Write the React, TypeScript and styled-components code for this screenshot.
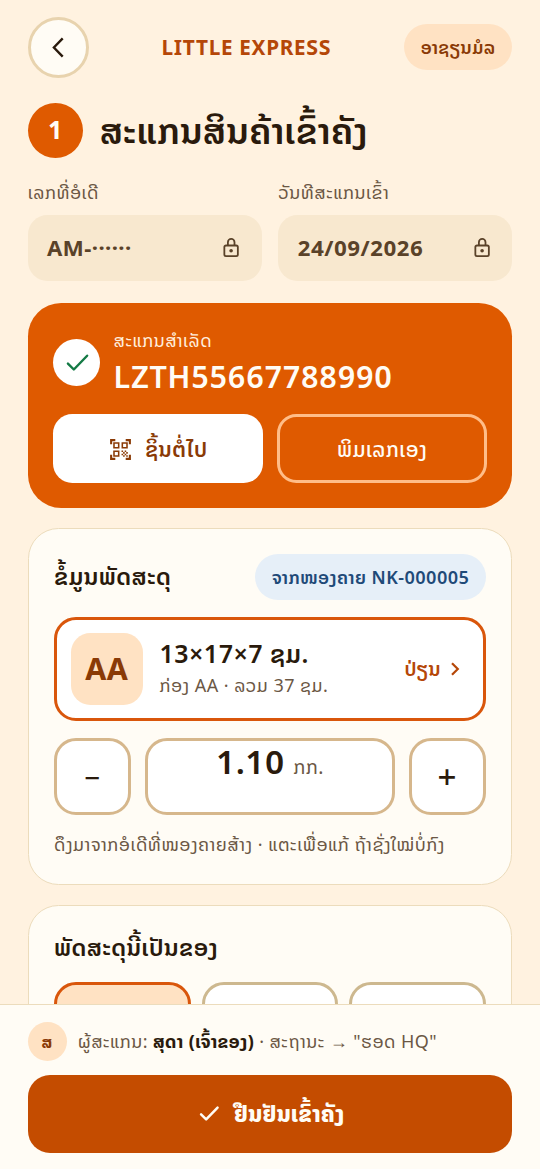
import React from "react";
import styled, { createGlobalStyle } from "styled-components";
import { MdQrCodeScanner } from "react-icons/md";

const Global = createGlobalStyle`
  * { box-sizing: border-box; }
  html, body { margin: 0; padding: 0; }
  body {
    background: #fff2e0;
    color: #2a1a0c;
    font-family: "Noto Sans Lao", "Noto Sans", sans-serif;
    letter-spacing: 0.443px;
  }
  button { font: inherit; color: inherit; letter-spacing: inherit; margin: 0; padding: 0; }
`;

const Screen = styled.div`
  height: 1169px;
  overflow: hidden;
  display: flex;
  flex-direction: column;
`;

const Content = styled.main`
  flex: 1;
  min-height: 0;
  overflow: hidden;
  padding: 16.6px 27.7px 0;
  display: flex;
  flex-direction: column;
  & > * { flex-shrink: 0; }
`;

const Header = styled.header`
  display: flex;
  align-items: center;
  justify-content: space-between;
  height: 61px;
`;

const BackButton = styled.button`
  width: 61px;
  height: 61px;
  border-radius: 50%;
  border: 3px solid #e8d3ae;
  background: #fffcf5;
  display: grid;
  place-items: center;
`;

const Brand = styled.div`
  font-size: 20.77px;
  font-weight: 700;
  letter-spacing: 0.72px;
  line-height: 28px;
  padding-top: 1px;
  color: #b54708;
`;

const Pill = styled.div<{ $tone: "peach" | "blue" }>`
  height: 45.7px;
  padding: 0 16.6px;
  border-radius: 23px;
  display: flex;
  align-items: center;
  font-size: 18px;
  font-weight: 600;
  white-space: nowrap;
  background: ${(p) => (p.$tone === "peach" ? "#ffe2c3" : "#e6eff8")};
  color: ${(p) => (p.$tone === "peach" ? "#8a3a06" : "#1f4a78")};
`;

const TitleRow = styled.div`
  margin-top: 25px;
  height: 55.4px;
  display: flex;
  align-items: center;
  gap: 16.6px;
`;

const StepNumber = styled.div`
  width: 55.4px;
  height: 55.4px;
  border-radius: 50%;
  background: #df5a00;
  color: #fffcf5;
  font-size: 24.9px;
  font-weight: 700;
  display: grid;
  place-items: center;
`;

const Title = styled.h1`
  margin: 0;
  padding-top: 2px;
  font-size: 36px;
  font-weight: 600;
  line-height: 46px;
  white-space: nowrap;
`;

const Fields = styled.div`
  margin-top: 22px;
  display: grid;
  grid-template-columns: 1fr 1fr;
  gap: 16.6px;
`;

const FieldLabel = styled.div`
  font-size: 18px;
  line-height: 26.3px;
  margin-bottom: 8.3px;
  color: #6b5744;
`;

const FieldBox = styled.div`
  height: 66.5px;
  border-radius: 19.4px;
  background: #f8e8cf;
  padding: 0 19.4px;
  display: flex;
  align-items: center;
  justify-content: space-between;
  font-size: 22.15px;
  font-weight: 700;
  color: #5a4229;
`;

const ScanCard = styled.section`
  margin-top: 22px;
  height: 205px;
  border-radius: 33.2px;
  background: #df5a00;
  padding: 25px;
  color: #fffcf5;
`;

const ScanTop = styled.div`
  display: flex;
  align-items: center;
  gap: 13.85px;
  height: 72px;
`;

const CheckBadge = styled.div`
  width: 47px;
  height: 47px;
  border-radius: 50%;
  background: #fff;
  color: #147a45;
  display: grid;
  place-items: center;
  margin-bottom: 3px;
`;

const ScanLabel = styled.div`
  font-size: 18px;
  line-height: 26px;
  padding-bottom: 2px;
  margin-top: -2px;
  color: #ffeedd;
`;

const ScanCode = styled.div`
  font-size: 30.46px;
  line-height: 42px;
  font-weight: 600;
  letter-spacing: 0.74px;
`;

const ScanActions = styled.div`
  margin-top: 14px;
  display: grid;
  grid-template-columns: 1fr 1fr;
  gap: 13.85px;
`;

const ScanButton = styled.button<{ $solid?: boolean }>`
  height: 69.2px;
  border-radius: 19.4px;
  display: flex;
  align-items: center;
  justify-content: center;
  gap: 12px;
  padding-top: 1px;
  font-size: ${(p) => (p.$solid ? "21.2px" : "20.77px")};
  font-weight: ${(p) => (p.$solid ? 600 : 500)};
  border: ${(p) => (p.$solid ? "0" : "3px solid #ffbd88")};
  background: ${(p) => (p.$solid ? "#fff" : "transparent")};
  color: ${(p) => (p.$solid ? "#8a3a06" : "#fffcf5")};
`;

const Card = styled.section`
  margin-top: 20px;
  border: 1.4px solid #ecdcbc;
  border-radius: 30.5px;
  background: #fffcf5;
  padding: 25.3px;
`;

const CardHead = styled.div`
  display: flex;
  align-items: center;
  justify-content: space-between;
  height: 45.7px;
`;

const CardTitle = styled.h2`
  margin: 0;
  font-size: 23.54px;
  font-weight: 600;
  line-height: 34px;
`;

const SizeRow = styled.div`
  margin-top: 16.6px;
  height: 104.5px;
  border: 3px solid #d9560b;
  border-radius: 22px;
  background: #fff;
  padding: 0 23px 0 13.85px;
  display: flex;
  align-items: center;
`;

const SizeTile = styled.div`
  width: 72px;
  height: 72px;
  border-radius: 19.4px;
  background: #ffe2c3;
  color: #8a3a06;
  font-size: 30.46px;
  font-weight: 700;
  display: grid;
  place-items: center;
`;

const SizeText = styled.div`
  margin-left: 16.6px;
  flex: 1;
`;

const SizeMain = styled.div`
  font-size: 24.9px;
  font-weight: 600;
  line-height: 34px;
`;

const SizeSub = styled.div`
  font-size: 18px;
  line-height: 26px;
  padding-top: 1px;
  color: #6b5744;
`;

const Change = styled.div`
  display: flex;
  align-items: center;
  gap: 9px;
  font-size: 19.4px;
  font-weight: 600;
  color: #b54708;
`;

const Stepper = styled.div`
  margin-top: 16.6px;
  display: grid;
  grid-template-columns: 77.5px 1fr 77.5px;
  gap: 13.85px;
  height: 77.5px;
`;

const StepButton = styled.button<{ $size: number }>`
  border: 3px solid #d6b78c;
  border-radius: 22px;
  background: #fff;
  font-family: "Noto Sans", sans-serif;
  font-size: ${(p) => p.$size}px;
  font-weight: 500;
  display: grid;
  place-items: center;
`;

const Weight = styled.div`
  border: 3px solid #d6b78c;
  border-radius: 22px;
  background: #fff;
  text-align: center;
  font-size: 33.2px;
  line-height: 43px;
  font-weight: 600;
`;

const Unit = styled.span`
  font-size: 19.4px;
  font-weight: 400;
  color: #6b5744;
`;

const Note = styled.p`
  margin: 17px 0 0;
  font-size: 18px;
  line-height: 26.3px;
  letter-spacing: 0.47px;
  color: #6b5744;
  white-space: nowrap;
`;

const Options = styled.div`
  margin-top: 16.6px;
  display: grid;
  grid-template-columns: repeat(3, 1fr);
  gap: 11px;
`;

const Option = styled.div<{ $active?: boolean }>`
  height: 88px;
  border-radius: 22px;
  border: 3px solid ${(p) => (p.$active ? "#d9560b" : "#cdb88f")};
  background: ${(p) => (p.$active ? "#ffe2c3" : "#fff")};
`;

const Footer = styled.footer`
  height: 165px;
  border-top: 1.4px solid #ecdcbc;
  background: #fffcf5;
  padding: 17px 27.7px;
`;

const Operator = styled.div`
  display: flex;
  align-items: center;
  gap: 11px;
  height: 39px;
  font-size: 18px;
  letter-spacing: 0.4px;
  color: #6b5744;
  white-space: nowrap;
  b { color: #2a1a0c; font-weight: 700; }
`;

const Avatar = styled.div`
  width: 39px;
  height: 39px;
  border-radius: 50%;
  background: #ffe2c3;
  color: #8a3a06;
  font-size: 16.6px;
  font-weight: 700;
  display: grid;
  place-items: center;
`;

const Confirm = styled.button`
  margin-top: 14px;
  width: 100%;
  height: 77.5px;
  border: 0;
  border-radius: 22px;
  background: #c44c00;
  color: #fffcf5;
  font-size: 22.3px;
  font-weight: 800;
  display: flex;
  align-items: center;
  justify-content: center;
  gap: 13.85px;
`;

const Check = ({ size, stroke }: { size: number; stroke: number }) => (
  <svg width={size} height={size} viewBox="0 0 24 24" fill="none">
    <path
      d="M4.9 12.9 L9.8 17.8 L20.8 6.4"
      stroke="currentColor"
      strokeWidth={stroke}
      strokeLinecap="round"
      strokeLinejoin="round"
    />
  </svg>
);

const Lock = () => (
  <svg width="22" height="22" viewBox="0 0 22 22" fill="none" stroke="currentColor" strokeWidth="1.8">
    <rect x="4.35" y="8.5" width="13.5" height="10.7" rx="1.6" />
    <path d="M7.9 8.5 V5.2 a3.3 3.3 0 0 1 6.6 0 V8.5" />
    <circle cx="11.1" cy="13.8" r="1.8" fill="currentColor" stroke="none" />
  </svg>
);

export default function App() {
  return (
    <Screen>
      <Global />
      <Content>
        <Header>
          <BackButton aria-label="Back">
            <svg width="12" height="21" viewBox="0 0 12 21" fill="none">
              <path d="M10.7 1.4 L1.9 10.5 L10.7 19.6" stroke="currentColor" strokeWidth="2.4" />
            </svg>
          </BackButton>
          <Brand>LITTLE EXPRESS</Brand>
          <Pill $tone="peach">ອາຊຽນມໍລ</Pill>
        </Header>

        <TitleRow>
          <StepNumber>1</StepNumber>
          <Title>ສະແກນສິນຄ້າເຂົ້າຄັງ</Title>
        </TitleRow>

        <Fields>
          <div>
            <FieldLabel>ເລກທີ່ອໍເດີ</FieldLabel>
            <FieldBox>
              <span>AM-······</span>
              <Lock />
            </FieldBox>
          </div>
          <div>
            <FieldLabel>ວັນທີສະແກນເຂົ້າ</FieldLabel>
            <FieldBox>
              <span>24/09/2026</span>
              <Lock />
            </FieldBox>
          </div>
        </Fields>

        <ScanCard>
          <ScanTop>
            <CheckBadge>
              <Check size={29} stroke={2} />
            </CheckBadge>
            <div>
              <ScanLabel>ສະແກນສຳເລັດ</ScanLabel>
              <ScanCode>LZTH55667788990</ScanCode>
            </div>
          </ScanTop>
          <ScanActions>
            <ScanButton $solid>
              <MdQrCodeScanner size={25} />
              ຊິ້ນຕໍ່ໄປ
            </ScanButton>
            <ScanButton>ພິມເລກເອງ</ScanButton>
          </ScanActions>
        </ScanCard>

        <Card>
          <CardHead>
            <CardTitle>ຂໍ້ມູນພັດສະດຸ</CardTitle>
            <Pill $tone="blue">ຈາກໜອງຄາຍ NK-000005</Pill>
          </CardHead>
          <SizeRow>
            <SizeTile>AA</SizeTile>
            <SizeText>
              <SizeMain>13×17×7 ຊມ.</SizeMain>
              <SizeSub>ກ່ອງ AA · ລວມ 37 ຊມ.</SizeSub>
            </SizeText>
            <Change>
              ປ່ຽນ
              <svg width="10" height="14" viewBox="0 0 10 14" fill="none">
                <path d="M2 1.2 L7.8 7 L2 12.8" stroke="currentColor" strokeWidth="2.2" />
              </svg>
            </Change>
          </SizeRow>
          <Stepper>
            <StepButton $size={27.7}>−</StepButton>
            <Weight>
              1.10 <Unit>ກກ.</Unit>
            </Weight>
            <StepButton $size={33.2}>+</StepButton>
          </Stepper>
          <Note>ດຶງມາຈາກອໍເດີທີ່ໜອງຄາຍສ້າງ · ແຕະເພື່ອແກ້ ຖ້າຊັ່ງໃໝ່ບໍ່ກົງ</Note>
        </Card>

        <Card>
          <CardTitle>ພັດສະດຸນີ້ເປັນຂອງ</CardTitle>
          <Options>
            <Option $active />
            <Option />
            <Option />
          </Options>
        </Card>
      </Content>

      <Footer>
        <Operator>
          <Avatar>ສ</Avatar>
          <span>
            ຜູ້ສະແກນ: <b>ສຸດາ (ເຈົ້າຂອງ)</b> · ສະຖານະ → "ຮອດ HQ"
          </span>
        </Operator>
        <Confirm>
          <Check size={24.9} stroke={2.4} />
          ຢືນຢັນເຂົ້າຄັງ
        </Confirm>
      </Footer>
    </Screen>
  );
}
